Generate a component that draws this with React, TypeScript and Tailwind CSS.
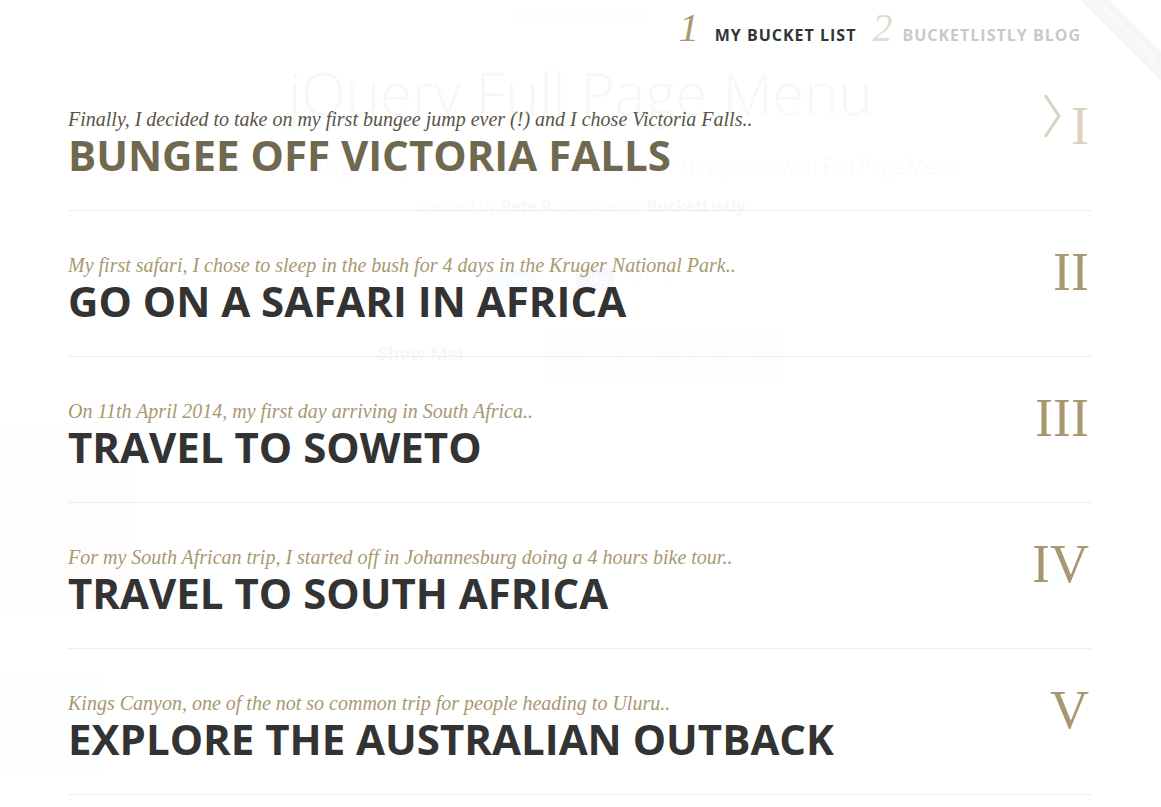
import React from 'react';

type Trip = {
  numeral: string;
  intro: string;
  title: string;
  active?: boolean;
};

const trips: Trip[] = [
  {
    numeral: 'I',
    intro: 'Finally, I decided to take on my first bungee jump ever (!) and I chose Victoria Falls..',
    title: 'Bungee off Victoria Falls',
    active: true,
  },
  {
    numeral: 'II',
    intro: 'My first safari, I chose to sleep in the bush for 4 days in the Kruger National Park..',
    title: 'Go on a safari in Africa',
  },
  {
    numeral: 'III',
    intro: 'On 11th April 2014, my first day arriving in South Africa..',
    title: 'Travel to Soweto',
  },
  {
    numeral: 'IV',
    intro: 'For my South African trip, I started off in Johannesburg doing a 4 hours bike tour..',
    title: 'Travel to South Africa',
  },
  {
    numeral: 'V',
    intro: 'Kings Canyon, one of the not so common trip for people heading to Uluru..',
    title: 'Explore the Australian Outback',
  },
];

const serif = "font-['Liberation_Serif','DejaVu_Serif',serif]";
const sans = "font-['Open_Sans','Liberation_Sans',sans-serif]";

// the demo page that sits under the menu overlay
function DemoPage() {
  return (
    <div className={`${sans} flex flex-col items-center text-[#333]`}>
      <div className="pt-[8px] text-[12px] text-[#888]">Back to The Pete Design</div>
      <h1 className="mt-[38px] text-[58px] font-light leading-none">jQuery Full Page Menu</h1>
      <p className="mt-[30px] text-[20px] font-light text-[#555]">
        Create a Full Page, Fully CSS Animated Menu for your Navigation with Full Page Menu
      </p>
      <p className="mt-[12px] text-[16px] text-[#777]">
        Created by <b className="text-[#333]">Pete R.</b> Founder of <b className="text-[#333]">BucketListly</b>
      </p>
      <div className="mt-[50px] flex gap-4 text-[12px] text-[#999]">
        <span className="rounded bg-[#55acee] px-2 py-[2px] text-white">Tweet</span>
        <span>3</span>
        <span className="rounded bg-[#3b5998] px-2 py-[2px] text-white">Like</span>
        <span>811</span>
        <span>3</span>
      </div>
      <div className="mt-[38px] flex items-center gap-[80px]">
        <span className="text-[18px] font-bold">Show Me!</span>
        <span className="rounded bg-[#d8e6f8] px-[28px] py-[12px] text-[18px] font-bold text-white">
          Download on Github
        </span>
      </div>
    </div>
  );
}

function Chevron() {
  return (
    <svg width="18" height="46" viewBox="0 0 18 46" className="mr-[10px] mt-[-6px]">
      <polyline points="2,2 16,23 2,44" fill="none" stroke="#dbd3c0" strokeWidth="3" />
    </svg>
  );
}

function TripRow({ trip }: { trip: Trip }) {
  return (
    <li className="flex h-[146px] items-start justify-between border-b border-[#ededed] pt-[34px]">
      <div className="mt-[8px]">
        <p
          className={`${serif} text-[20px] italic leading-[24px] ${
            trip.active ? 'text-[#5a5448]' : 'text-[#a89870]'
          }`}
        >
          {trip.intro}
        </p>
        <h2
          className={`${sans} mt-[3px] text-[42px] font-bold uppercase leading-[42px] ${
            trip.active ? 'text-[#716850]' : 'text-[#333]'
          }`}
        >
          {trip.title}
        </h2>
      </div>
      <div className="flex items-start pr-[2px]">
        {trip.active && <Chevron />}
        <span
          className={`${serif} text-[54px] leading-none ${trip.active ? 'text-[#dbd3c0]' : 'text-[#a89870]'}`}
        >
          {trip.numeral}
        </span>
      </div>
    </li>
  );
}

export default function App() {
  return (
    <div className="relative h-screen overflow-hidden bg-white">
      <DemoPage />

      {/* ads down the left side of the demo page */}
      <div className="absolute left-0 top-[430px] h-[182px] w-[130px] bg-[#f3c9b8]" />
      <div className="absolute left-0 top-[673px] h-[100px] w-[103px] bg-[#b9d7f1]" />

      {/* full page menu */}
      <div className="absolute inset-0 bg-white/[0.96]">
        <nav className="flex h-[65px] items-start justify-end pr-[80px] pt-[8px]">
          <a className="flex items-baseline">
            <span className={`${serif} text-[40px] italic leading-none text-[#a89870]`}>1</span>
            <span className={`${sans} ml-[16px] text-[16px] font-bold uppercase tracking-[1px] text-[#333]`}>
              My Bucket List
            </span>
          </a>
          <a className="ml-[16px] flex items-baseline">
            <span className={`${serif} text-[40px] italic leading-none text-[#e2dccd]`}>2</span>
            <span className={`${sans} ml-[10px] text-[16px] font-bold uppercase tracking-[1px] text-[#c9c9c9]`}>
              Bucketlistly Blog
            </span>
          </a>
        </nav>

        <ul className="pl-[68px] pr-[70px]">
          {trips.map((t) => (
            <TripRow key={t.numeral} trip={t} />
          ))}
        </ul>
      </div>

      {/* github ribbon */}
      <div className="absolute right-[-46px] top-[22px] w-[160px] rotate-45 bg-[#f6f6f6] py-[3px] text-center text-[9px] text-white">
        Fork me on GitHub
      </div>
    </div>
  );
}
